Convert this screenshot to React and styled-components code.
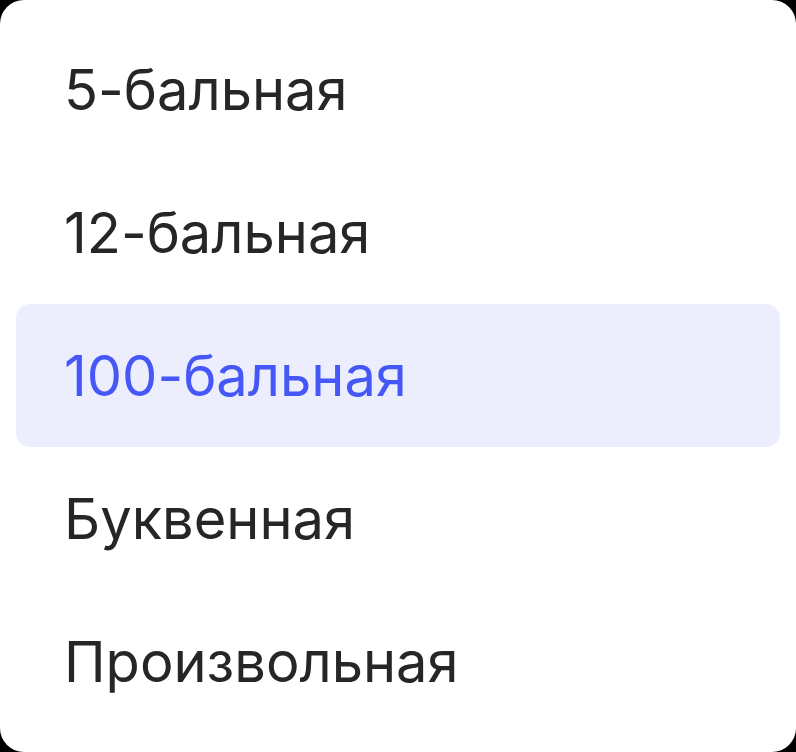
import React from 'react';
import styled, { createGlobalStyle } from 'styled-components';

const Global = createGlobalStyle`
  html, body {
    margin: 0;
    padding: 0;
    background: #000;
  }
`;

const Card = styled.ul`
  box-sizing: border-box;
  width: 796px;
  height: 752px;
  margin: 0;
  padding: 18px 16px;
  list-style: none;
  background: #fff;
  border-radius: 24px;
  display: flex;
  flex-direction: column;
  font-family: Inter, 'Noto Sans', sans-serif;
`;

const Item = styled.li`
  height: 143px;
  flex: none;
  display: flex;
  align-items: center;
  padding-left: 48px;
  border-radius: 14px;
  font-size: 56px;
  color: ${(p) => (p.$active ? '#4557f6' : '#262626')};
  background: ${(p) => (p.$active ? '#eceefd' : 'transparent')};
`;

const options = ['5-бальная', '12-бальная', '100-бальная', 'Буквенная', 'Произвольная'];

const App = () => (
  <>
    <Global />
    <Card>
      {options.map((o) => (
        <Item key={o} $active={o === '100-бальная'}>
          {o}
        </Item>
      ))}
    </Card>
  </>
);

export default App;
